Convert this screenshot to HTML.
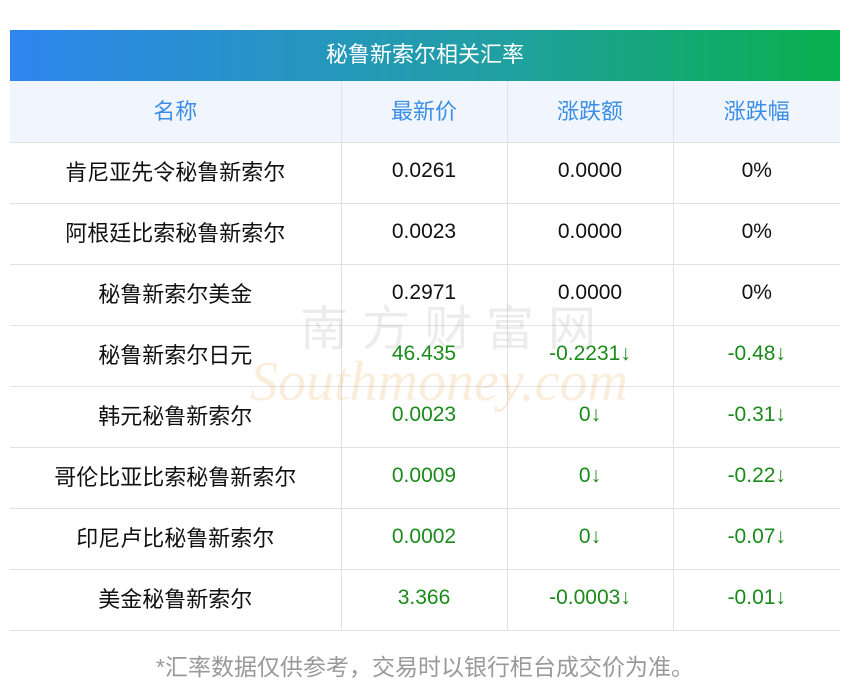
<!DOCTYPE html>
<html><head><meta charset="utf-8"><style>
body{margin:0;background:#fff;font-family:"Liberation Sans","Noto Sans CJK SC",sans-serif;}
.t{position:absolute;left:10px;top:30px;width:830px;}
.h{height:51px;background:linear-gradient(90deg,#2e86ee,#20a0a0 60%,#08b04c);color:#fff;font-size:22px;text-align:center;line-height:49px;}
table{border-collapse:collapse;width:830px;table-layout:fixed;}
td{height:61px;border-bottom:1px solid #e0e2ea;border-left:1px solid #e0e2ea;text-align:center;font-size:21px;color:#111;padding:0 0 3px 0;box-sizing:border-box;}
td:first-child{border-left:none;font-size:22px;}
tr.hd td{background:#f1f6fe;color:#3a8ee6;font-size:22px;}
.g{color:#1a8a1a;}
.f{position:absolute;top:648px;left:0;width:850px;text-align:center;color:#999;font-size:23px;}
.wm{position:absolute;left:240px;top:290px;width:430px;height:130px;opacity:.18;}
</style></head><body>
<div class="t">
<div class="h">秘鲁新索尔相关汇率</div>
<table>
<colgroup><col style="width:331px"><col style="width:166px"><col style="width:166px"><col style="width:167px"></colgroup>
<tr class="hd"><td>名称</td><td>最新价</td><td>涨跌额</td><td>涨跌幅</td></tr>
<tr><td>肯尼亚先令秘鲁新索尔</td><td>0.0261</td><td>0.0000</td><td>0%</td></tr>
<tr><td>阿根廷比索秘鲁新索尔</td><td>0.0023</td><td>0.0000</td><td>0%</td></tr>
<tr><td>秘鲁新索尔美金</td><td>0.2971</td><td>0.0000</td><td>0%</td></tr>
<tr><td>秘鲁新索尔日元</td><td class="g">46.435</td><td class="g">-0.2231↓</td><td class="g">-0.48↓</td></tr>
<tr><td>韩元秘鲁新索尔</td><td class="g">0.0023</td><td class="g">0↓</td><td class="g">-0.31↓</td></tr>
<tr><td>哥伦比亚比索秘鲁新索尔</td><td class="g">0.0009</td><td class="g">0↓</td><td class="g">-0.22↓</td></tr>
<tr><td>印尼卢比秘鲁新索尔</td><td class="g">0.0002</td><td class="g">0↓</td><td class="g">-0.07↓</td></tr>
<tr><td>美金秘鲁新索尔</td><td class="g">3.366</td><td class="g">-0.0003↓</td><td class="g">-0.01↓</td></tr>
</table>
</div>
<svg class="wm" viewBox="0 0 430 130"><text x="60" y="55" font-size="48" fill="#999" font-family="Noto Sans CJK SC" letter-spacing="14">南方财富网</text><text x="10" y="110" font-size="56" fill="#e8a040" font-style="italic" font-family="Liberation Serif">Southmoney.com</text></svg>
<div class="f">*汇率数据仅供参考，交易时以银行柜台成交价为准。</div>
</body></html>
